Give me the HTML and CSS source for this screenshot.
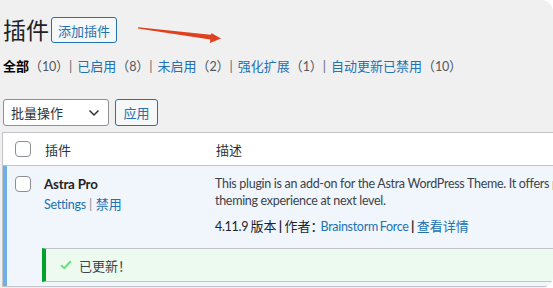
FILE: index.html
```html
<!DOCTYPE html>
<html lang="zh-CN">
<head>
<meta charset="utf-8">
<title>插件</title>
<link rel="stylesheet" href="styles.css">
</head>
<body>
<div class="screen">
  <div class="wrap">
    <div class="title-row">
      <h1 class="page-title">插件</h1>
      <a class="btn-outline title-action">添加插件</a>
    </div>
    <svg class="annot-arrow" width="100" height="30" viewBox="130 20 100 30" aria-hidden="true">
      <path d="M138 27.2 L210.5 34.8 L211.6 33.2 L221 38.6 L209.8 43 L210.4 39.6 L138 28.4 Z" fill="#e0401c"/>
    </svg>
    <ul class="subsubsub">
      <li><a class="current">全部<span class="count">（<span class="lat">10</span>）</span></a><span class="bar">|</span></li>
      <li><a>已启用<span class="count">（<span class="lat">8</span>）</span></a><span class="bar">|</span></li>
      <li><a>未启用<span class="count">（<span class="lat">2</span>）</span></a><span class="bar">|</span></li>
      <li><a>强化扩展<span class="count">（<span class="lat">1</span>）</span></a><span class="bar">|</span></li>
      <li><a>自动更新已禁用<span class="count">（<span class="lat">10</span>）</span></a></li>
    </ul>
    <div class="tablenav">
      <div class="select">
        <span>批量操作</span>
        <svg width="12" height="8" viewBox="0 0 12 8" aria-hidden="true"><path d="M1.5 1.5 L6 6 L10.5 1.5" fill="none" stroke="#2c3338" stroke-width="1.5"/></svg>
      </div>
      <a class="btn-outline apply">应用</a>
    </div>
    <div class="plugins">
      <div class="thead">
        <div class="cell check"><span class="checkbox"></span></div>
        <div class="cell col-name">插件</div>
        <div class="cell col-desc">描述</div>
      </div>
      <div class="active-block">
        <div class="row">
          <div class="cell check"><span class="checkbox"></span></div>
          <div class="cell col-name">
            <strong class="plugin-title">Astra Pro</strong>
            <div class="row-actions"><a class="lat">Settings</a> <span class="sep">|</span> <a>禁用</a></div>
          </div>
          <div class="cell col-desc">
            <p class="desc lat">This plugin is an add-on for the Astra WordPress Theme. It offers <span class="hl">p</span>owerful features to take your<br>theming experience at next level.</p>
            <p class="meta"><span class="lat">4.11.9</span> 版本 <b class="pipe">|</b> <span class="colon">作者：</span><a class="lat">Brainstorm Force</a> <b class="pipe">|</b> <a>查看详情</a></p>
          </div>
        </div>
        <div class="update-row">
          <div class="notice">
            <svg class="tick" width="12" height="10" viewBox="0 0 12 10" aria-hidden="true"><path d="M1.2 5.2 L4.3 8.2 L10.8 1.3" fill="none" stroke="#68de7c" stroke-width="2"/></svg>
            <span>已更新！</span>
          </div>
        </div>
      </div>
    </div>
  </div>
</div>
</body>
</html>
```
FILE: styles.css
```css
* { box-sizing: border-box; }
html, body { margin: 0; padding: 0; background: #ffffff; }
body {
  font-family: Lato, "Noto Sans CJK SC", sans-serif;
  font-size: 13px;
  color: #3c434a;
}
.lat {
  font-size: 12.5px;
  letter-spacing: -0.3px;
}
.screen {
  width: 553px;
  height: 288px;
  background: #f0f0f1;
  border-radius: 0 12px 12px 0;
  overflow: hidden;
}
.wrap {
  position: relative;
  padding: 0 0 0 2px;
}
.title-row {
  display: flex;
  align-items: center;
  padding: 17px 0 0 1px;
  height: 43px;
}
.page-title {
  margin: 0;
  font-size: 23px;
  font-weight: 400;
  line-height: 26px;
  color: #1d2327;
}
.btn-outline {
  display: inline-flex;
  align-items: center;
  justify-content: center;
  border: 1px solid #2271b1;
  border-radius: 3px;
  background: #f6f7f7;
  color: #2271b1;
  font-size: 13px;
  text-decoration: none;
}
.title-action {
  margin-left: 2px;
  height: 26px;
  width: 66px;
  padding: 0;
}
.annot-arrow {
  position: absolute;
  left: 130px;
  top: 20px;
}
.subsubsub {
  list-style: none;
  margin: 13px 0 0 1px;
  padding: 0;
  display: flex;
  height: 20px;
  line-height: 20px;
  color: #646970;
  white-space: nowrap;
}
.subsubsub li { display: flex; }
.subsubsub .bar { margin: 0 5px 0 0; color: #646970; }
.subsubsub a { color: #2271b1; text-decoration: none; }
.subsubsub a.current { color: #000; font-weight: 700; }
.subsubsub .count { color: #50575e; font-weight: 400; }
.tablenav {
  display: flex;
  gap: 6px;
  margin: 23px 0 0 1px;
  height: 27px;
}
.select {
  width: 106px;
  height: 27px;
  border: 1px solid #8c8f94;
  border-radius: 3px;
  background: #fff;
  display: flex;
  align-items: center;
  justify-content: space-between;
  padding: 0 8px 0 7px;
  color: #2c3338;
  font-size: 13px;
}
.apply {
  width: 43px;
  height: 27px;
}
.plugins {
  margin-top: 6px;
  width: 760px;
  border: 1px solid #c3c4c7;
  background: #fff;
}
.thead {
  display: grid;
  grid-template-columns: 32px 171px 1fr;
  align-items: center;
  height: 33px;
  border-bottom: 1px solid #c3c4c7;
  color: #2c3338;
}
.check { padding-left: 12px; display: flex; }
.checkbox {
  display: block;
  width: 16px;
  height: 16px;
  border: 1px solid #8c8f94;
  border-radius: 4px;
  background: #fff;
}
.thead .col-name { padding-left: 10px; }
.thead .col-desc { padding-left: 10px; }
.active-block {
  background: #f0f6fc;
  box-shadow: inset 4px 0 0 #72aee6;
  padding-bottom: 4px;
}
.row {
  display: grid;
  grid-template-columns: 32px 171px 1fr;
  padding-top: 8px;
}
.row .check { padding-top: 2px; align-items: flex-start; }
.row .col-name { padding-left: 9px; }
.plugin-title {
  display: block;
  font-size: 13.3px;
  letter-spacing: -0.2px;
  line-height: 20px;
  color: #1d2327;
  font-weight: 700;
}
.row-actions { line-height: 20px; color: #a7aaad; }
.row-actions a { color: #2271b1; }
.row-actions .sep { color: #8c8f94; }
.row .col-desc { padding-left: 9px; }
.desc {
  margin: 0;
  padding-top: 1px;
  line-height: 17px;
  color: #3c434a;
  white-space: nowrap;
}
.hl { color: #b46b2c; }
.meta {
  margin: 7px 0 0 0;
  line-height: 20px;
  color: #1d2327;
  white-space: nowrap;
  word-spacing: -1px;
}
.colon { margin-right: -3px; }
.meta a { color: #2271b1; }
.pipe { font-weight: 700; color: #1d2327; }
.update-row {
  padding: 11px 0 0 39px;
}
.notice {
  height: 34px;
  border-top: 1px solid #c3c4c7;
  border-bottom: 1px solid #c3c4c7;
  border-left: 4px solid #00a32a;
  background: #edfaef;
  display: flex;
  align-items: center;
  padding-left: 14px;
  color: #3c434a;
}
.tick { margin-right: 7px; }
```
